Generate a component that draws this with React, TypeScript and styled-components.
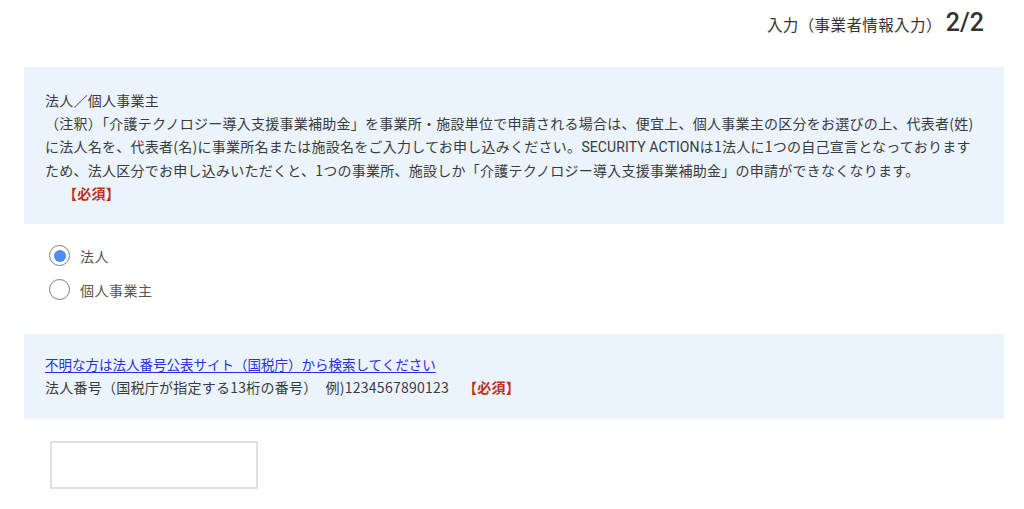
import React, { useState } from "react";
import styled, { createGlobalStyle } from "styled-components";

const Global = createGlobalStyle`
  html, body { margin: 0; padding: 0; background: #fff; }
  body {
    font-family: "Noto Sans CJK JP", "Noto Sans", sans-serif;
    color: #3a3a3a;
  }
`;

const Page = styled.div`
  width: 1024px;
  padding: 0 20px 0 24px;
  box-sizing: border-box;
`;

const StepHeader = styled.div`
  display: flex;
  justify-content: flex-end;
  align-items: baseline;
  height: 67px;
  padding: 8px 20px 0 0;
  box-sizing: border-box;
  color: #333;
`;

const StepLabel = styled.span`
  font-size: 15.5px;
  letter-spacing: 0.4px;
`;

const StepCount = styled.span`
  font-family: Roboto, "Liberation Sans", sans-serif;
  font-size: 25px;
  font-weight: 500;
  margin-left: 4px;
`;

const Panel = styled.div<{ $pad: string }>`
  background: #ebf3fc;
  padding: ${(p) => p.$pad};
  font-size: 14px;
  line-height: 23px;
  letter-spacing: 0.25px;
  color: #3a3a3a;
`;

const Line = styled.div`
  white-space: nowrap;
`;

const Required = styled.span<{ $indent?: number }>`
  color: #c1301c;
  font-weight: bold;
  margin-left: ${(p) => p.$indent ?? 0}px;
`;

const Latin = styled.span`
  font-family: Roboto, "Noto Sans CJK JP", sans-serif;
  letter-spacing: 0.1px;
`;

const RadioGroup = styled.div`
  display: flex;
  flex-direction: column;
  gap: 13px;
  padding: 21px 0 34px 25px;
`;

const RadioRow = styled.label`
  display: flex;
  align-items: center;
  gap: 10px;
  font-size: 14px;
  color: #555;
  cursor: pointer;
  letter-spacing: 0.5px;
`;

const RadioCircle = styled.span<{ $checked: boolean }>`
  width: 21px;
  height: 21px;
  box-sizing: border-box;
  border-radius: 50%;
  border: 1.5px solid #7a7a7a;
  display: flex;
  align-items: center;
  justify-content: center;
  background: #fff;
  &::after {
    content: "";
    width: 12px;
    height: 12px;
    border-radius: 50%;
    background: ${(p) => (p.$checked ? "#4d8cf5" : "transparent")};
  }
`;

const Link = styled.a`
  color: #2a2ee0;
  font-size: 13.5px;
  letter-spacing: 0;
  text-decoration: underline;
  text-underline-offset: 2px;
`;

const Example = styled.span`
  margin-left: 8px;
`;

const InputWrap = styled.div`
  padding: 22px 0 0 26px;
`;

const TextInput = styled.input`
  width: 208px;
  height: 48px;
  box-sizing: border-box;
  border: 2px solid #e0e0e0;
  outline: none;
  font-size: 14px;
  padding: 0 10px;
`;

export default function App() {
  const [kind, setKind] = useState("corp");
  return (
    <Page>
      <Global />
      <StepHeader>
        <StepLabel>入力（事業者情報入力）</StepLabel>
        <StepCount>2/2</StepCount>
      </StepHeader>
      <Panel $pad="22px 18px 19px 21px">
        <Line>法人／個人事業主</Line>
        <Line>
          （注釈）「介護テクノロジー導入支援事業補助金」を事業所・施設単位で申請される場合は、便宜上、個人事業主の区分をお選びの上、代表者(姓)
        </Line>
        <Line>
          に法人名を、代表者(名)に事業所名または施設名をご入力してお申し込みください。<Latin>SECURITY ACTION</Latin>は1法人に1つの自己宣言となっております
        </Line>
        <Line>
          ため、法人区分でお申し込みいただくと、1つの事業所、施設しか「介護テクノロジー導入支援事業補助金」の申請ができなくなります。
        </Line>
        <Line>
          <Required $indent={18}>【必須】</Required>
        </Line>
      </Panel>
      <RadioGroup>
        <RadioRow onClick={() => setKind("corp")}>
          <RadioCircle $checked={kind === "corp"} />
          法人
        </RadioRow>
        <RadioRow onClick={() => setKind("indiv")}>
          <RadioCircle $checked={kind === "indiv"} />
          個人事業主
        </RadioRow>
      </RadioGroup>
      <Panel $pad="19px 18px 20px 21px">
        <Line>
          <Link href="#">不明な方は法人番号公表サイト（国税庁）から検索してください</Link>
        </Line>
        <Line>
          法人番号（国税庁が指定する13桁の番号）<Example>例)1234567890123</Example>
          <Required $indent={14}>【必須】</Required>
        </Line>
      </Panel>
      <InputWrap>
        <TextInput type="text" />
      </InputWrap>
    </Page>
  );
}
